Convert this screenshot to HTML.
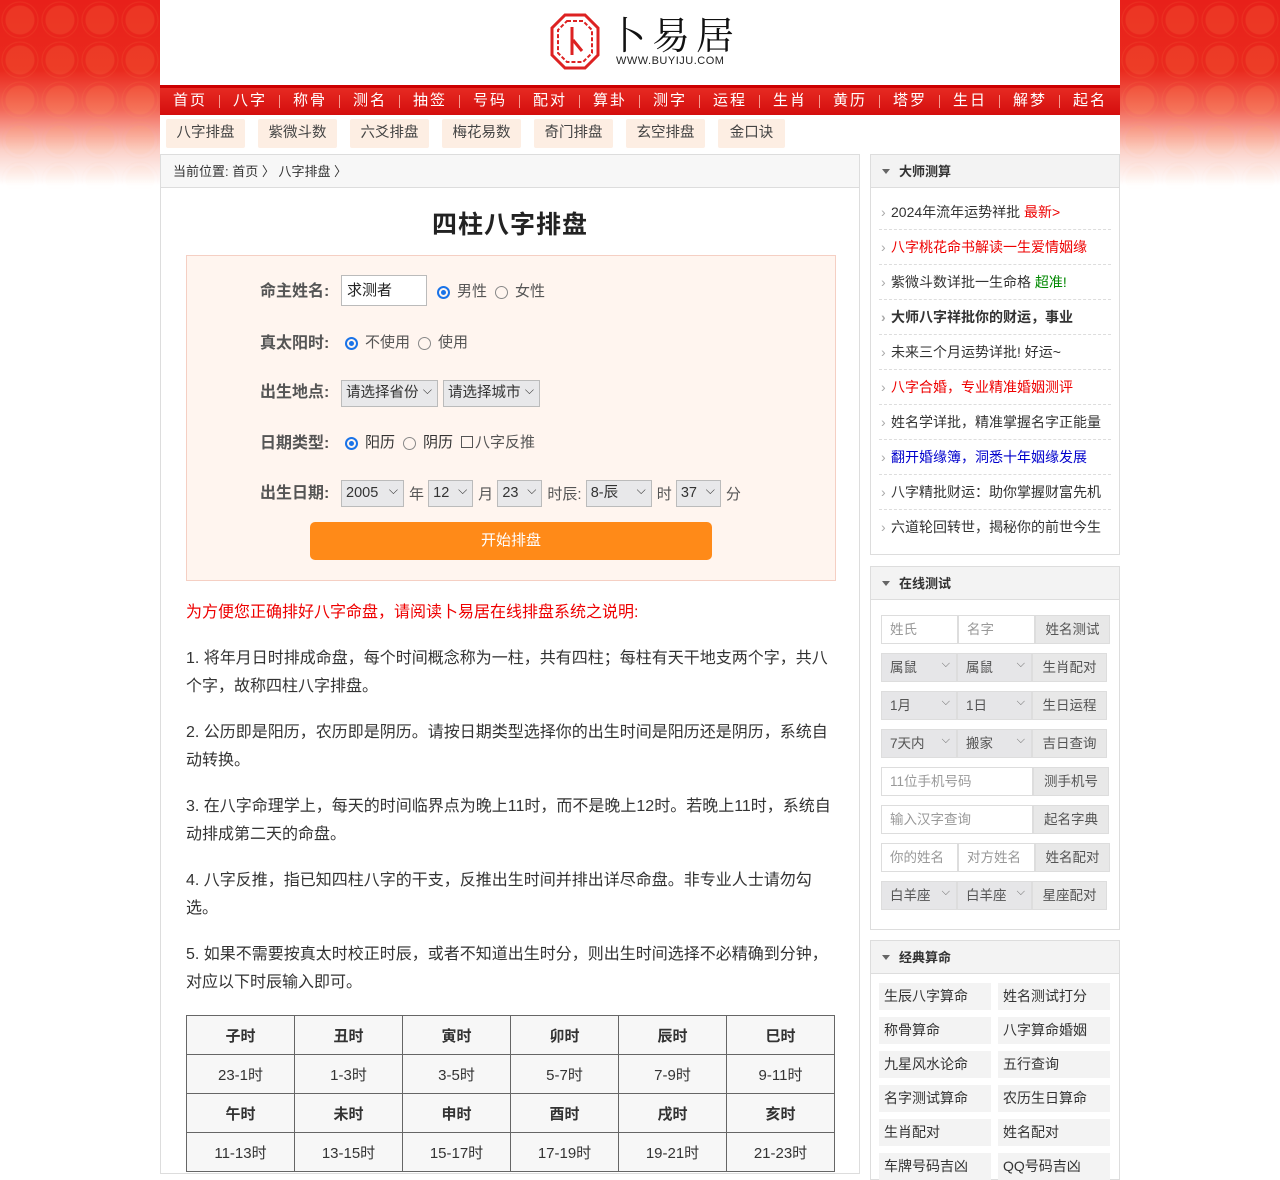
<!DOCTYPE html>
<html><head><meta charset="utf-8"><style>
*{margin:0;padding:0;box-sizing:border-box}
body{width:1280px;height:1167px;overflow:hidden;font-family:"Liberation Sans","Noto Sans CJK SC",sans-serif;font-size:14px;color:#333;background:#fff;position:relative}
.bg{position:absolute;left:0;top:0;width:1280px;height:190px;background:linear-gradient(#e8201a 0,#ea2a1e 70px,#f36a5a 110px,#fbd0c8 150px,#fff 185px)}
.bg:before{content:"";position:absolute;inset:0;background:radial-gradient(circle at 20px 20px,rgba(255,170,90,.25) 0 14px,transparent 15px 17px,rgba(255,170,90,.2) 18px,transparent 19px);background-size:40px 40px;opacity:.6;-webkit-mask:linear-gradient(#000 60%,transparent);mask:linear-gradient(#000 60%,transparent)}
.wrap{position:absolute;left:160px;top:0;width:960px;height:1167px;background:#fff}
.abs{position:absolute}
.nav{left:0;top:85px;width:960px;height:30px;background:linear-gradient(#e62a22,#d40d0d);border-top:3px solid #c00;display:flex}
.nav a{width:60px;color:#fff;font-size:15px;text-align:center;line-height:26px;letter-spacing:2px;position:relative}
.nav a:after{content:"";position:absolute;right:0;top:7px;height:13px;border-right:1px solid #f59a90}
.nav a:last-child:after{display:none}
.sub{top:119px;left:6px;display:flex;gap:13px}
.sub span{background:#fdeee3;height:29px;line-height:29px;width:79px;text-align:center;font-size:14.5px;color:#444;border-radius:2px}
.main{left:0;top:154px;width:700px;height:1020px;border:1px solid #ddd}
.crumb{height:33px;background:#f7f7f7;border-bottom:1px solid #ddd;line-height:33px;padding-left:12px;font-size:13px}
h1{text-align:center;font-size:25px;margin-top:17px;color:#222;letter-spacing:1px}
.form{position:absolute;left:25px;top:100px;width:650px;height:326px;background:#fff5ef;border:1px solid #f5cfc3}
.lbl{position:absolute;left:73px;font-size:16px;font-weight:bold;color:#555}
.row{position:absolute;left:154px;font-size:15px;color:#555;display:flex;align-items:center}
.rad{display:inline-block;width:13px;height:13px;border:1px solid #888;border-radius:50%;margin:0 7px 0 4px;position:relative;top:2px}
.rad.on{border:2px solid #1a73e8}.rad.on:after{content:"";position:absolute;left:2px;top:2px;width:5px;height:5px;background:#1a73e8;border-radius:50%}
.sel{display:inline-block;height:27px;border:1px solid #bbb;background:#e8e8ea;font-size:14.5px;line-height:25px;padding-left:4px;position:relative;color:#333;margin-right:5px}
.sel:after{content:"⌵";position:absolute;right:5px;top:-3px;font-size:12px}
.btn{position:absolute;left:123px;top:266px;width:402px;height:38px;background:#ff8a18;border-radius:5px;color:#fff;font-size:15px;text-align:center;line-height:38px}
.txt{position:absolute;left:25px;width:650px;font-size:16px;line-height:28px;color:#333}
table{position:absolute;left:25px;top:860px;width:649px;border-collapse:collapse;background:#f7f7f7}
td{border:1px solid #666;height:39px;text-align:center;font-size:15px;width:108px}
tr.h td{font-weight:bold}
.side{left:710px;width:250px;border:1px solid #ddd}
.sh{height:33px;background:#f3f3f3;border-bottom:1px solid #ddd;line-height:33px;padding-left:28px;font-weight:bold;font-size:13px;position:relative;color:#333}
.sh:before{content:"";position:absolute;left:11px;top:14px;border:4px solid transparent;border-top:5px solid #666}
.li{margin:0 8px;height:35px;line-height:35px;border-bottom:1px dashed #ddd;padding-left:12px;font-size:14px;position:relative}
.li:before{content:"›";position:absolute;left:2px;color:#aaa}
.r{color:#e00}
.fr{position:absolute;left:10px;height:29px;display:flex;font-size:13.5px;color:#999}
.fr span{border:1px solid #ddd;height:29px;line-height:27px;padding-left:8px;background:#fff}
.fr .g{background:#e6e6e8;color:#555;position:relative}
.fr .g:after{content:"⌵";position:absolute;right:6px;top:-3px;font-size:11px;color:#666}
.fr .b{background:#e8e8e8;color:#555;text-align:center;padding:0}
.grid{position:absolute;left:8px;top:42px;display:grid;grid-template-columns:112px 112px;gap:7px}
.grid span{background:#f3f3f3;height:27px;line-height:27px;padding-left:5px;font-size:14px}
</style></head><body>
<div class="bg"></div>
<div class="wrap">
 <svg class="abs" style="left:390px;top:13px" width="50" height="58" viewBox="0 0 50 58"><polygon points="15,2 35,2 48,15 48,42 35,55 15,55 2,42 2,15" fill="none" stroke="#d22" stroke-width="3"/><polygon points="17,8 33,8 42,17 42,40 33,49 17,49 8,40 8,17" fill="none" stroke="#d22" stroke-width="2" stroke-dasharray="4 2"/><path d="M22 14 V42 M23 27 L32 38" stroke="#d22" stroke-width="3" fill="none"/></svg>
 <div class="abs" style="left:448px;top:10px;font-family:'Noto Serif CJK SC',serif;font-size:38px;letter-spacing:6px;color:#111;line-height:46px">卜易居</div>
 <div class="abs" style="left:456px;top:55px;font-size:11px;letter-spacing:.5px;color:#222">WWW.BUYIJU.COM</div>
 <div class="abs nav"><a>首页</a><a>八字</a><a>称骨</a><a>测名</a><a>抽签</a><a>号码</a><a>配对</a><a>算卦</a><a>测字</a><a>运程</a><a>生肖</a><a>黄历</a><a>塔罗</a><a>生日</a><a>解梦</a><a>起名</a></div>
 <div class="abs sub"><span>八字排盘</span><span>紫微斗数</span><span>六爻排盘</span><span>梅花易数</span><span>奇门排盘</span><span>玄空排盘</span><span style="width:67px">金口诀</span></div>
 <div class="abs main">
  <div class="crumb">当前位置: 首页 〉 八字排盘 〉</div>
  <h1>四柱八字排盘</h1>
  <div class="form">
   <div class="lbl" style="top:21px">命主姓名:</div>
   <div class="row" style="top:19px"><span style="display:inline-block;width:86px;height:31px;border:1px solid #bbb;background:#fff;padding-left:5px;line-height:29px;color:#222">求测者</span><span class="rad on" style="margin-left:10px"></span>男性<span class="rad" style="margin-left:8px"></span>女性</div>
   <div class="lbl" style="top:73px">真太阳时:</div>
   <div class="row" style="top:75px"><span class="rad on"></span>不使用<span class="rad" style="margin-left:8px"></span>使用</div>
   <div class="lbl" style="top:122px">出生地点:</div>
   <div class="row" style="top:124px"><span class="sel" style="width:97px">请选择省份</span><span class="sel" style="width:97px">请选择城市</span></div>
   <div class="lbl" style="top:173px">日期类型:</div>
   <div class="row" style="top:175px;color:#333"><span class="rad on"></span>阳历<span class="rad" style="margin-left:8px"></span>阴历<span style="display:inline-block;width:12px;height:12px;border:1px solid #555;margin:0 2px 0 8px"></span><span style="color:#555">八字反推</span></div>
   <div class="lbl" style="top:223px">出生日期:</div>
   <div class="row" style="top:224px"><span class="sel" style="width:63px">2005</span>年&nbsp;<span class="sel" style="width:45px">12</span>月&nbsp;<span class="sel" style="width:45px">23</span>时辰:&nbsp;<span class="sel" style="width:66px">8-辰</span>时&nbsp;<span class="sel" style="width:45px">37</span>分</div>
   <div class="btn">开始排盘</div>
  </div>
  <div class="txt r" style="top:444px;color:#e00">为方便您正确排好八字命盘，请阅读卜易居在线排盘系统之说明:</div>
  <div class="txt" style="top:490px">1. 将年月日时排成命盘，每个时间概念称为一柱，共有四柱；每柱有天干地支两个字，共八个字，故称四柱八字排盘。</div>
  <div class="txt" style="top:564px">2. 公历即是阳历，农历即是阴历。请按日期类型选择你的出生时间是阳历还是阴历，系统自动转换。</div>
  <div class="txt" style="top:638px">3. 在八字命理学上，每天的时间临界点为晚上11时，而不是晚上12时。若晚上11时，系统自动排成第二天的命盘。</div>
  <div class="txt" style="top:712px">4. 八字反推，指已知四柱八字的干支，反推出生时间并排出详尽命盘。非专业人士请勿勾选。</div>
  <div class="txt" style="top:786px">5. 如果不需要按真太时校正时辰，或者不知道出生时分，则出生时间选择不必精确到分钟，对应以下时辰输入即可。</div>
  <table><tr class="h"><td>子时</td><td>丑时</td><td>寅时</td><td>卯时</td><td>辰时</td><td>巳时</td></tr>
  <tr><td>23-1时</td><td>1-3时</td><td>3-5时</td><td>5-7时</td><td>7-9时</td><td>9-11时</td></tr>
  <tr class="h"><td>午时</td><td>未时</td><td>申时</td><td>酉时</td><td>戌时</td><td>亥时</td></tr>
  <tr><td>11-13时</td><td>13-15时</td><td>15-17时</td><td>17-19时</td><td>19-21时</td><td>21-23时</td></tr></table>
 </div>
 <div class="abs side" style="top:154px;height:401px">
  <div class="sh">大师测算</div>
  <div style="height:7px"></div>
  <div class="li">2024年流年运势祥批 <span class="r">最新&gt;</span></div>
  <div class="li r">八字桃花命书解读一生爱情姻缘</div>
  <div class="li">紫微斗数详批一生命格 <span style="color:#080">超准!</span></div>
  <div class="li" style="font-weight:bold">大师八字祥批你的财运，事业</div>
  <div class="li">未来三个月运势详批! 好运~</div>
  <div class="li r">八字合婚，专业精准婚姻测评</div>
  <div class="li">姓名学详批，精准掌握名字正能量</div>
  <div class="li" style="color:#00c">翻开婚缘簿，洞悉十年姻缘发展</div>
  <div class="li">八字精批财运：助你掌握财富先机</div>
  <div class="li" style="border:0">六道轮回转世，揭秘你的前世今生</div>
 </div>
 <div class="abs side" style="top:566px;height:364px">
  <div class="sh">在线测试</div>
  <div class="fr" style="top:48px"><span style="width:77px">姓氏</span><span style="width:77px">名字</span><span class="b" style="width:75px">姓名测试</span></div>
  <div class="fr" style="top:86px"><span class="g" style="width:76px">属鼠</span><span class="g" style="width:75px">属鼠</span><span class="b" style="width:75px">生肖配对</span></div>
  <div class="fr" style="top:124px"><span class="g" style="width:76px">1月</span><span class="g" style="width:75px">1日</span><span class="b" style="width:75px">生日运程</span></div>
  <div class="fr" style="top:162px"><span class="g" style="width:76px">7天内</span><span class="g" style="width:75px">搬家</span><span class="b" style="width:75px">吉日查询</span></div>
  <div class="fr" style="top:200px"><span style="width:152px">11位手机号码</span><span class="b" style="width:76px">测手机号</span></div>
  <div class="fr" style="top:238px"><span style="width:152px">输入汉字查询</span><span class="b" style="width:76px">起名字典</span></div>
  <div class="fr" style="top:276px"><span style="width:77px">你的姓名</span><span style="width:77px">对方姓名</span><span class="b" style="width:75px">姓名配对</span></div>
  <div class="fr" style="top:314px"><span class="g" style="width:76px;color:#555">白羊座</span><span class="g" style="width:75px;color:#555">白羊座</span><span class="b" style="width:75px">星座配对</span></div>
 </div>
 <div class="abs side" style="top:940px;height:240px">
  <div class="sh">经典算命</div>
  <div class="grid"><span>生辰八字算命</span><span>姓名测试打分</span><span>称骨算命</span><span>八字算命婚姻</span><span>九星风水论命</span><span>五行查询</span><span>名字测试算命</span><span>农历生日算命</span><span>生肖配对</span><span>姓名配对</span><span>车牌号码吉凶</span><span>QQ号码吉凶</span></div>
 </div>
</div>
</body></html>
